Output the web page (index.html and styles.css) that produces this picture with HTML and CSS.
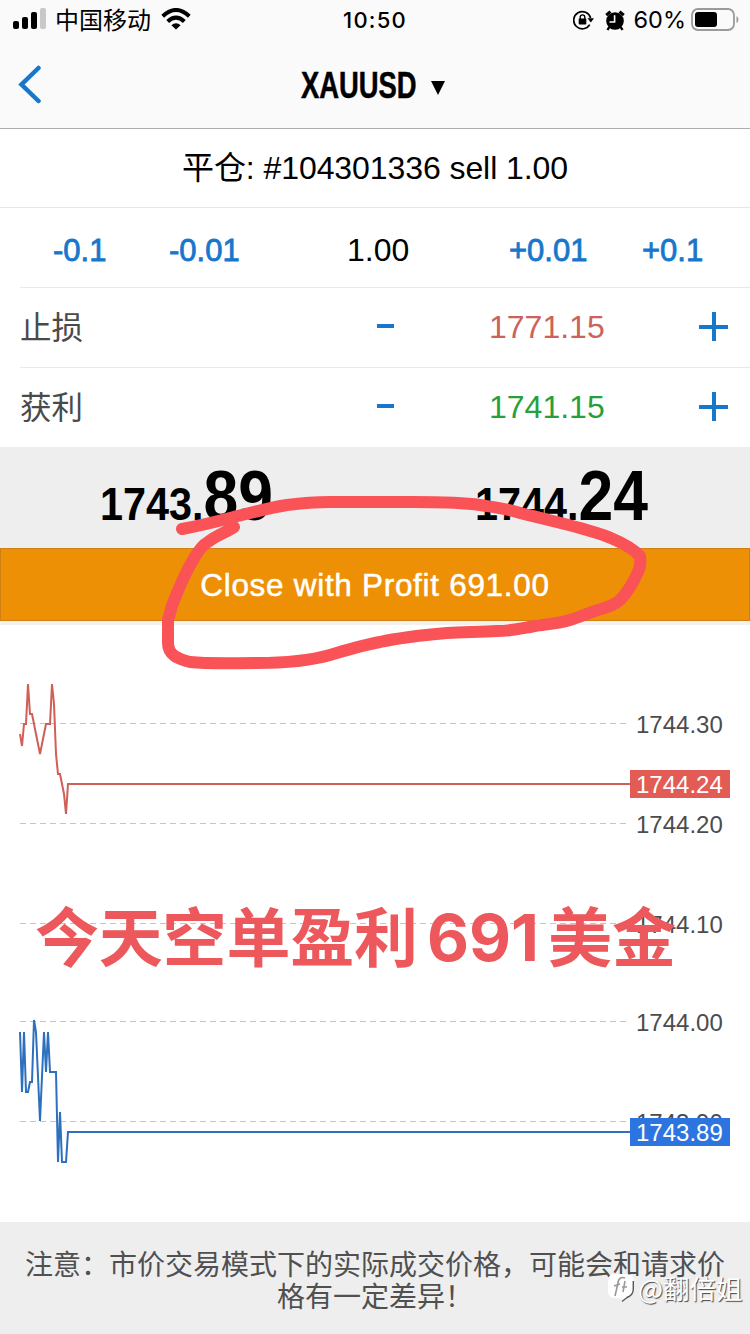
FILE: index.html
```html
<!DOCTYPE html>
<html lang="zh-CN">
<head>
<meta charset="utf-8">
<title>XAUUSD</title>
<link rel="stylesheet" href="styles.css">
</head>
<body>
<main class="screen">
  <header class="top">
    <div class="status">
      <div class="status-left">
        <svg width="34" height="22" viewBox="0 0 34 22">
          <rect x="0" y="13" width="6" height="8" rx="2"/>
          <rect x="9" y="9" width="6" height="12" rx="2"/>
          <rect x="18" y="4" width="6" height="17" rx="2"/>
          <rect x="27" y="0" width="6" height="21" rx="2" fill="#c8c8c8"/>
        </svg>
        <span class="carrier">中国移动</span>
        <svg class="wifi" width="30" height="22" viewBox="0 0 30 22" fill="none" stroke="#000" stroke-width="4">
          <path d="M1.700 8.200Q15-4.200 28.300 8.200"/>
          <path d="M6.700 13.500Q15 5.800 23.300 13.500"/>
          <path d="M10.400 17.200Q15 13.200 19.600 17.200L15 21.600Z" fill="#000" stroke="none"/>
        </svg>
      </div>
      <div class="clock">10:50</div>
      <div class="status-right">
        <svg width="21" height="20" viewBox="0 0 21 20">
          <path d="M16.700 14.600A8.600 8.600 0 1 1 17.600 8" fill="none" stroke="#000" stroke-width="1.700"/>
          <path d="M14.500 8.300H21L17.800 12.500Z"/>
          <rect x="5.700" y="8.600" width="7.600" height="5.900" rx=".8"/>
          <path d="M7.200 9V7.200a2.300 2.300 0 0 1 4.600 0V9" fill="none" stroke="#000" stroke-width="1.400"/>
        </svg>
        <svg class="alarm" width="20" height="21" viewBox="0 0 20 21">
          <circle cx="10" cy="11" r="8.800"/>
          <path d="M1.200 5.200 5.500 1.600M14.500 1.600 18.800 5.200" stroke="#000" stroke-width="3"/>
          <path d="M4.300 17 2.500 20M15.700 17l1.800 3" stroke="#000" stroke-width="2.400"/>
          <path d="M9.600 5.300V12H4.500" fill="none" stroke="#fff" stroke-width="1.600"/>
        </svg>
        <span class="percent">60%</span>
        <svg class="battery" width="48" height="24" viewBox="0 0 48 24">
          <rect x="1" y="1" width="42" height="21" rx="6" fill="none" stroke="#9a9a9a" stroke-width="1.800"/>
          <rect x="4" y="4" width="22" height="15" rx="3"/>
          <path d="M45.500 8q2 1 2 3.500t-2 3.500Z" fill="#9a9a9a"/>
        </svg>
      </div>
    </div>
    <div class="nav">
      <svg class="back" width="24" height="40" viewBox="0 0 24 40" fill="none" stroke="#1877cb" stroke-width="4.500" stroke-linecap="round"><path d="M20.500 4 3.500 20.500 20.500 37"/></svg>
      <div class="title"><span class="symbol">XAUUSD</span><svg class="caret" width="14" height="15" viewBox="0 0 14 15"><path d="M0 0H14L7 14Z"/></svg></div>
    </div>
  </header>

  <div class="order">平仓: #104301336 sell 1.00</div>

  <div class="lots">
    <span class="step">-0.1</span><span class="step">-0.01</span><span class="lot">1.00</span><span class="step">+0.01</span><span class="step">+0.1</span>
  </div>
  <div class="level">
    <span class="name">止损</span><i class="minus"></i><span class="value loss">1771.15</span><i class="plus"></i>
  </div>
  <div class="level">
    <span class="name">获利</span><i class="minus"></i><span class="value gain">1741.15</span><i class="plus"></i>
  </div>

  <section class="quotes">
    <div class="quote"><span class="price">1743.<b>89</b></span></div>
    <div class="quote"><span class="price">1744.<b>24</b></span></div>
  </section>
  <div class="close-order">Close with Profit 691.00</div>

  <svg class="chart" width="750" height="596" viewBox="0 626 750 596">
    <g stroke="#c3c6c6" stroke-dasharray="6 4">
      <path d="M20 723.500H630M20 823.500H630M20 923.500H630M20 1021.500H630M20 1121.500H630"/>
    </g>
    <g class="tick">
      <text x="636" y="733">1744.30</text>
      <text x="636" y="833">1744.20</text>
      <text x="636" y="933">1744.10</text>
      <text x="636" y="1031">1744.00</text>
      <text x="636" y="1131">1743.90</text>
    </g>
    <path d="M20 734 22 746 24 724H26L28 684 30 714H32L40 754 46 724H50L52 684 54 704 56 754 58 774H60L64 794 66 814 68 784H630" fill="none" stroke="#cf5f57" stroke-width="2"/>
    <path d="M20 1032 22 1092 24 1032 26 1092H28L30 1082H32L34 1020 36 1032 40 1121 44 1032 46 1072 48 1032 50 1072H56L58 1162 60 1112 62 1162H66L68 1132H630" fill="none" stroke="#2d70bd" stroke-width="2"/>
    <rect x="630" y="770" width="100" height="28" fill="#e25c55"/>
    <rect x="630" y="1118" width="100" height="28" fill="#2c74df"/>
    <g class="tag">
      <text x="636" y="793">1744.24</text>
      <text x="636" y="1141">1743.89</text>
    </g>
  </svg>

  <footer class="note">注意：市价交易模式下的实际成交价格，可能会和请求价<br>格有一定差异！</footer>

  <svg class="annotation" width="750" height="1334" viewBox="0 0 750 1334">
    <path d="M182 529C198 526 215 522 230 518C250 513 268 508 287 505C302 503 315 502 330 502H413C438 502 460 502 480 505C493 507 502 508 513 511C535 517 558 522 580 528C593 532 603 534 613 539C625 544 633 549 640 556C641 563 640 569 637 574C632 585 627 593 620 600C614 606 606 607 598 610C588 613 580 617 570 620C557 624 545 624 530 627C519 629 510 631 497 631C480 632 463 632 447 633C424 635 402 637 380 642C363 645 347 650 330 655C305 662 280 663 257 663C234 663 210 664 190 662C178 659 168 655 168 643V620C170 611 173 602 177 593C182 581 187 570 193 560C198 551 202 545 208 542C217 535 227 532 234 527" fill="none" stroke="#f95257" stroke-width="12" stroke-linecap="round" stroke-linejoin="round"/>
    <g class="caption">
      <text x="35" y="961" textLength="383">今天空单盈利</text>
      <text class="digits" x="427" y="961" textLength="112" lengthAdjust="spacingAndGlyphs">691</text>
      <text x="548" y="961" textLength="128">美金</text>
    </g>
  </svg>

  <div class="watermark">
    <svg width="26" height="30" viewBox="0 0 26 30">
      <path d="M7 1H18Q26 1 26 9V16Q26 23 19 25L14 29 13 25H7Q0 25 0 18V8Q0 1 7 1Z" fill="#fff"/>
      <path d="M25.300 8V16Q25.300 22 19 24.500L14 28.500" fill="none" stroke="#555" stroke-width="1.400"/>
      <path d="M17 5Q11 3 10 10L7 23M6 13 12 11M14 14H19M17 8 15 19" fill="none" stroke="#999" stroke-width="1.600"/>
    </svg>
    <span>@翻倍姐</span>
  </div>
</main>
</body>
</html>
```

FILE: styles.css
```css
* { box-sizing: border-box; }
body { margin: 0; }
.screen {
  position: relative;
  width: 750px;
  height: 1334px;
  overflow: hidden;
  display: flex;
  flex-direction: column;
  background: #fff;
  color: #000;
  font-family: "Liberation Sans", "Noto Sans CJK SC", sans-serif;
}
.screen svg { display: block; flex: none; }

.top { height: 129px; background: #fafafa; border-bottom: 1px solid #adadad; }
.status { height: 40px; display: grid; grid-template-columns: 1fr auto 1fr; align-items: center; padding: 0 11px 0 13px; }
.status-left, .status-right { display: flex; align-items: center; }
.status-left { padding-bottom: 2px; }
.status-right { justify-content: flex-end; }
.carrier { margin-left: 8px; font: 24px/36px "Noto Sans CJK SC", sans-serif; }
.wifi { margin-left: 10px; }
.clock { font: 500 22px/38px Inter, sans-serif; letter-spacing: 1.2px; margin-left: -2px; }
.alarm { margin-left: 11px; }
.percent { margin-left: 9px; font: 23.5px/40px Inter, sans-serif; letter-spacing: 0; }
.battery { margin-left: 5px; }

.nav { height: 88px; display: grid; grid-template-columns: 150px 1fr 150px; align-items: center; }
.back { margin-left: 18px; }
.title { display: flex; align-items: center; justify-content: center; padding: 4px 4px 0 0; }
.symbol { font-size: 37px; line-height: 44px; font-weight: 700; width: 116px; margin-right: 14px; transform: scaleX(.74); transform-origin: left; -webkit-text-stroke: .5px #000; }
.caret { margin-top: 4px; }

.order { height: 79px; border-bottom: 1px solid #e6e6e6; text-align: center; font-size: 32px; line-height: 78px; letter-spacing: -.08px; }

.lots { height: 80px; margin-left: 20px; padding-left: 33px; display: grid; grid-template-columns: 116px 178px 162px 133px 1fr; align-items: center; border-bottom: 1px solid #e9e9e9; font-size: 31px; line-height: 74px; }
.lots span { padding-top: 6px; }
.step { color: #1877cb; -webkit-text-stroke: .8px #1877cb; }
.lots .lot { font-size: 32px; padding-top: 3px; }

.level { height: 80px; margin-left: 20px; display: grid; grid-template-columns: 357px 112px 210px 1fr; align-items: center; border-bottom: 1px solid #e9e9e9; font-size: 32px; }
.level + .quotes { margin-top: -1px; }
.name { color: #4a4a4a; font: 31.5px/72px "Noto Sans CJK SC", sans-serif; padding-bottom: 5px; }
.value { line-height: 76px; padding-bottom: 2px; }
.loss { color: #cc6259; }
.gain { color: #27a03c; }
.minus { width: 17px; height: 4px; margin-bottom: 3px; background: #1877cb; }
.plus { width: 29px; height: 29px; margin-bottom: 2px; background: linear-gradient(#1877cb, #1877cb) center / 100% 4px no-repeat, linear-gradient(#1877cb, #1877cb) center / 4px 100% no-repeat; }

.quotes { height: 101px; flex: none; background: #eee; display: grid; grid-template-columns: 1fr 1fr; }
.quote { padding: 9px 0 0 100px; }
.price { display: inline-block; white-space: nowrap; font-size: 47px; line-height: 80px; font-weight: 700; transform: scaleX(.88); transform-origin: left; }
.price b { font-size: 71px; }

.close-order { height: 73px; flex: none; background: #ed9006; border: 1px solid #cf8012; color: #fff; text-align: center; font-size: 31.5px; line-height: 73px; letter-spacing: .7px; -webkit-text-stroke: .5px #fff; box-shadow: 0 4px 0 #f3f1ee; }

.chart { margin-top: 5px; font-size: 24px; }
.tick { fill: #4c4c4c; }
.tag { fill: #fff; }

.note { flex: 1; background: #eee; color: #505050; text-align: center; font: 28px/32px "Noto Sans CJK SC", sans-serif; padding-top: 25px; white-space: nowrap; }

.annotation { position: absolute; inset: 0; }
.caption { fill: #ec585b; font: 700 64px "Noto Sans CJK SC", sans-serif; }
.digits { font-family: Inter, sans-serif; font-size: 64px; }

.watermark { position: absolute; left: 608px; top: 1271px; display: flex; align-items: center; color: #fff; font: 26.5px/34px "Noto Sans CJK SC", sans-serif; text-shadow: 1px 1px 1px #444; white-space: nowrap; }
.watermark span { margin-left: 4px; }
```
